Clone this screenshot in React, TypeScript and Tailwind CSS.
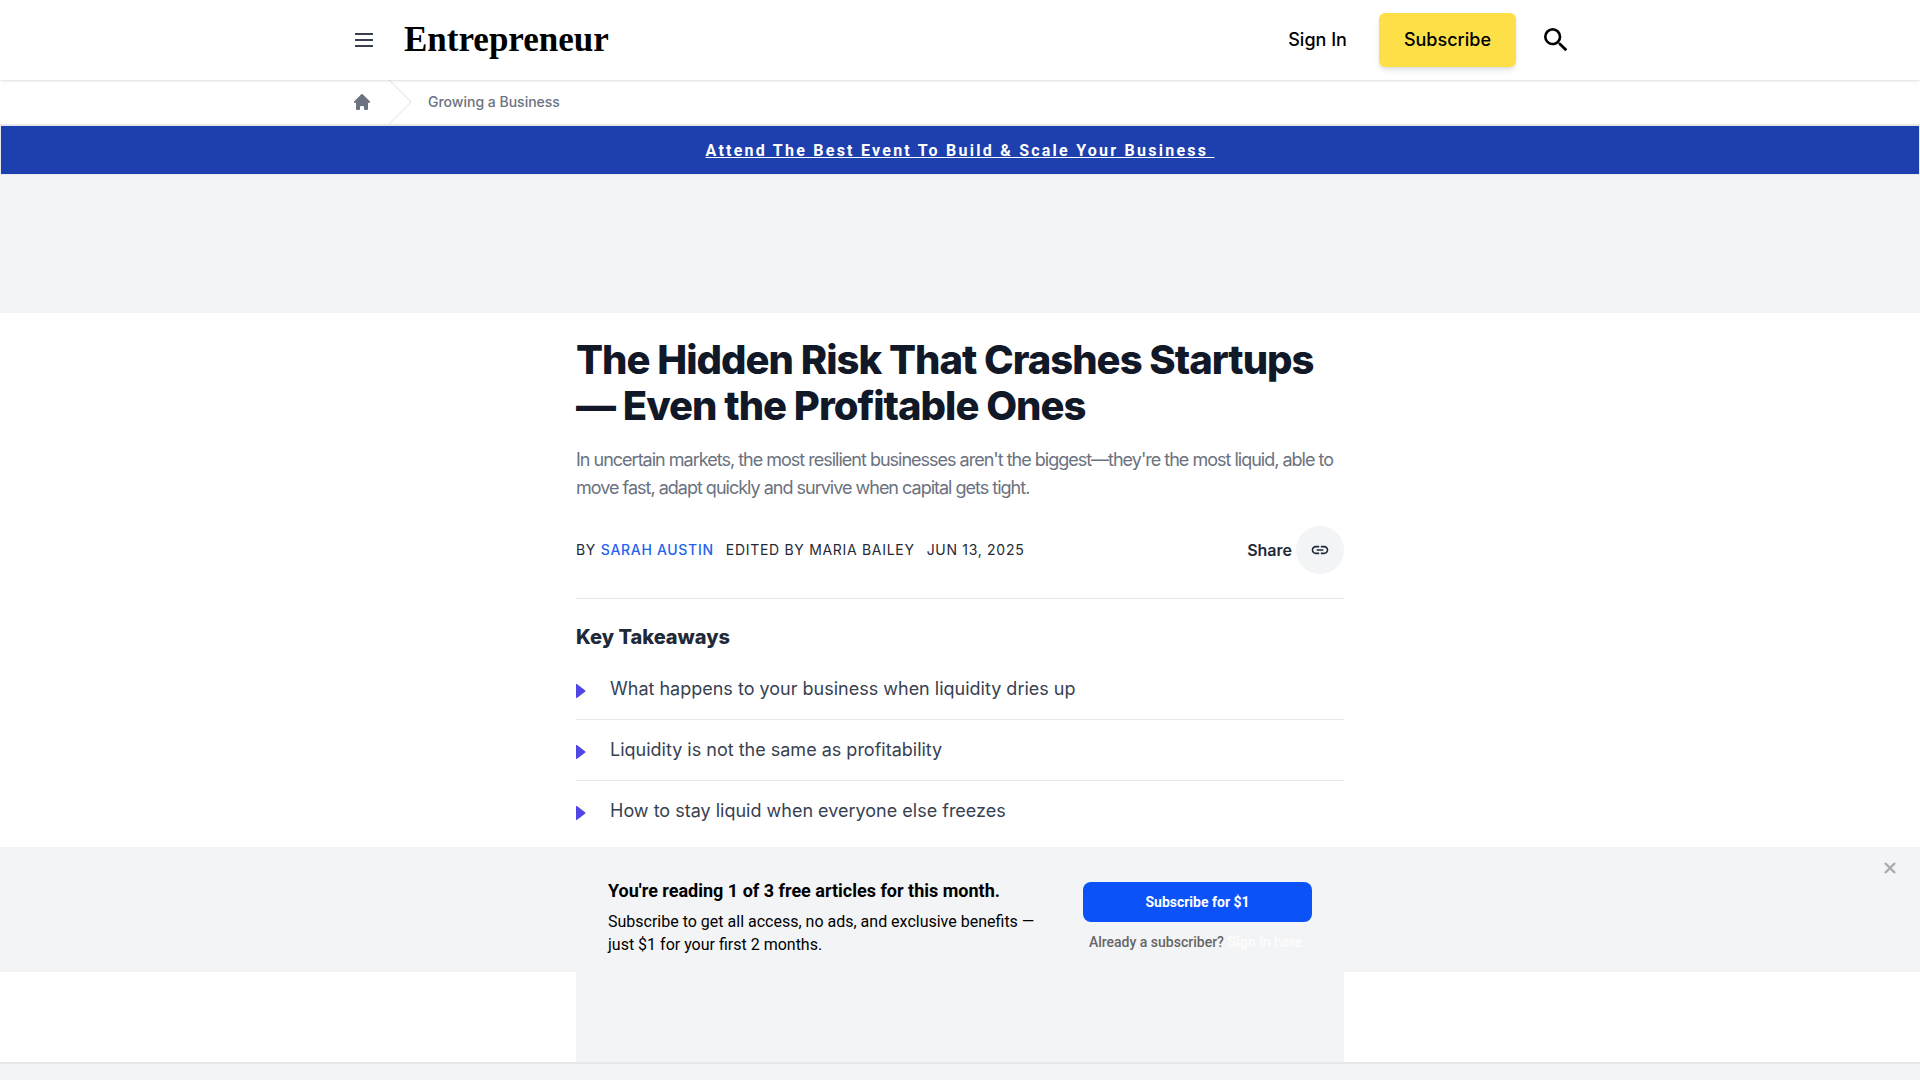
import { HiHome } from "react-icons/hi";
import { MdLink, MdSearch } from "react-icons/md";

const takeaways = [
  "What happens to your business when liquidity dries up",
  "Liquidity is not the same as profitability",
  "How to stay liquid when everyone else freezes",
];

function Header() {
  return (
    <header className="relative z-10 bg-white shadow">
      <div className="mx-auto flex h-20 max-w-7xl items-center pr-7 pl-8">
        <button type="button" aria-label="Open menu" className="text-[#374151]">
          <svg className="size-6" fill="none" viewBox="0 0 24 24" stroke="currentColor" strokeWidth="2" aria-hidden="true">
            <path d="M3 6h18M3 12h18M3 18h18" />
          </svg>
        </button>
        <a href="#" className="ml-7 font-['Liberation_Serif',serif] text-[35px] leading-10 font-bold text-black">
          Entrepreneur
        </a>
        <div className="ml-auto flex items-center text-lg font-medium text-black">
          <a href="#">Sign In</a>
          <a href="#" className="ml-8 flex h-[54px] items-center rounded-md bg-[#fde047] px-[25px] shadow-md">
            Subscribe
          </a>
          <button type="button" aria-label="Search" className="ml-6">
            <MdSearch className="size-8" />
          </button>
        </div>
      </div>
    </header>
  );
}

function Breadcrumb() {
  return (
    <nav aria-label="Breadcrumb" className="border-b border-[#e5e7eb] bg-white">
      <ol className="mx-auto flex h-11 max-w-7xl items-center gap-4 px-8 text-[#6b7280]">
        <li className="flex h-full items-center gap-4">
          <a href="#" aria-label="Home">
            <HiHome className="size-5" />
          </a>
          <svg className="h-full w-6 text-[#e5e7eb]" viewBox="0 0 24 44" preserveAspectRatio="none" fill="currentColor" aria-hidden="true">
            <path d="M.293 0l22 22-22 22h1.414l22-22-22-22H.293z" />
          </svg>
        </li>
        <li className="flex">
          <a href="#" className="text-sm font-medium">Growing a Business</a>
        </li>
      </ol>
    </nav>
  );
}

function Promo() {
  return (
    <div className="border border-[#e5e7eb]">
      <div className="flex h-12 items-center justify-center bg-[#1e40af] pt-0.5 font-[Roboto,sans-serif]">
        <a href="#" className="font-bold tracking-[0.14em] text-white underline">
          Attend The Best Event To Build &amp; Scale Your Business&nbsp;
        </a>
      </div>
    </div>
  );
}

function Article() {
  return (
    <article className="mx-auto max-w-3xl pt-6">
      <h1 className="text-[40px] leading-[46px] font-extrabold tracking-tight text-[#111827]">
        The Hidden Risk That Crashes Startups — Even the Profitable Ones
      </h1>
      <p className="mt-[17px] text-lg leading-7 tracking-[-1px] text-[#6b7280]">
        In uncertain markets, the most resilient businesses aren't the biggest—they're the most liquid, able to move
        fast, adapt quickly and survive when capital gets tight.
      </p>
      <div className="mt-6 flex items-center justify-between border-b border-[#e5e7eb] pb-6 text-[#1f2937]">
        <div className="flex gap-3 text-sm tracking-wider uppercase">
          <span>
            By <a href="#" className="font-medium text-[#2563eb]">Sarah Austin</a>
          </span>
          <span>Edited by Maria Bailey</span>
          <time>Jun 13, 2025</time>
        </div>
        <div className="flex items-center gap-1 font-semibold">
          Share
          <button type="button" aria-label="Copy link" className="flex size-12 items-center justify-center rounded-full bg-[#f3f4f6]">
            <MdLink className="size-5" />
          </button>
        </div>
      </div>
      <h2 className="mt-6 text-xl leading-7 font-extrabold text-[#1f2937]">Key Takeaways</h2>
      <ul className="mt-2 divide-y divide-[#e5e7eb]">
        {takeaways.map((text) => (
          <li key={text} className="flex items-center gap-6 py-4 text-lg leading-7 text-[#374151]">
            <svg className="mt-1 h-4 w-[10px] text-[#4f46e5]" viewBox="0 0 10 16" fill="currentColor" aria-hidden="true">
              <path d="M0 1.2C.6.8 1 1 1.5 1.4L9 7.2c.6.5.6 1.1 0 1.6l-7.500 5.800c-.5.4-.9.6-1.500.2z" />
            </svg>
            {text}
          </li>
        ))}
      </ul>
      <div className="mt-6 h-[200px] bg-[#f3f4f6]" />
    </article>
  );
}

function OfferBar() {
  return (
    <aside className="fixed inset-x-0 bottom-[108px] bg-[#f3f4f6] font-[Roboto,sans-serif]">
      <div className="mx-auto flex h-[125px] max-w-3xl items-start justify-between px-8 pt-8 text-black">
        <div className="w-[450px]">
          <p className="text-lg leading-6 font-bold">You're reading 1 of 3 free articles for this month.</p>
          <p className="mt-[7px] leading-[23px]">
            Subscribe to get all access, no ads, and exclusive benefits — just $1 for your first 2 months.
          </p>
        </div>
        <div className="mt-[3px] w-[229px] text-center text-sm">
          <button type="button" className="h-10 w-full rounded-lg bg-[#0b53f9] font-bold text-white">
            Subscribe for $1
          </button>
          <p className="mt-[10px] font-medium text-[#666]">
            Already a subscriber? <a href="#" className="font-bold text-[#fcfcfc]">Sign in here.</a>
          </p>
        </div>
      </div>
      <button type="button" aria-label="Close" className="absolute top-[11px] right-5 text-[#aaa]">
        <svg className="size-5" viewBox="0 0 20 20" fill="none" stroke="currentColor" strokeWidth="2.4" aria-hidden="true">
          <path d="M5 5l10 10M15 5L5 15" />
        </svg>
      </button>
    </aside>
  );
}

export default function App() {
  return (
    <div className="min-h-screen bg-white font-[Inter,sans-serif]">
      <Header />
      <Breadcrumb />
      <Promo />
      <div className="h-[138px] bg-[#f3f4f6]" />
      <Article />
      <OfferBar />
      <div className="fixed inset-x-0 bottom-0 h-[18px] border-t-2 border-[#e5e7eb] bg-[#f3f4f6]" />
    </div>
  );
}
